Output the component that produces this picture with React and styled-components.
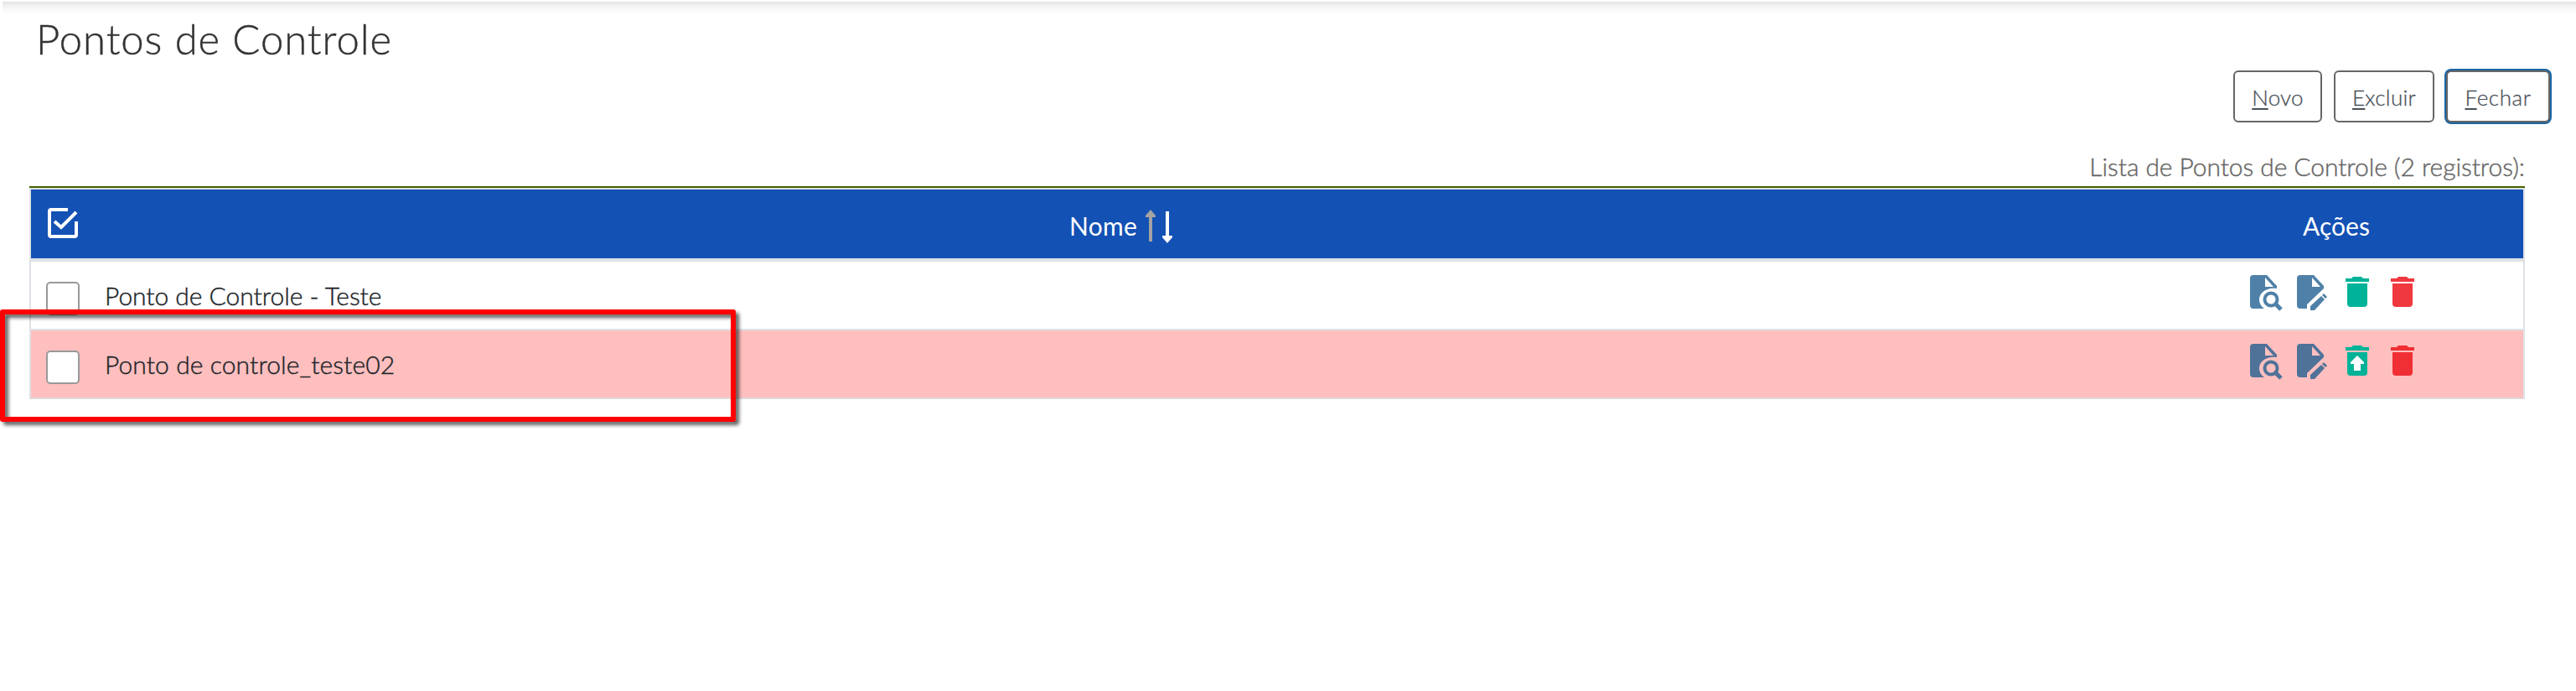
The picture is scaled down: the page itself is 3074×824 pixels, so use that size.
import React from "react";
import styled, { createGlobalStyle } from "styled-components";

const Global = createGlobalStyle`
  *{box-sizing:border-box}
  body{margin:0;background:#fff;color:#212529;font-family:Lato,"Open Sans",sans-serif;font-weight:300;overflow:hidden}
`;
const Page = styled.main`
  position: relative;
  height: 824px;
  padding-top: 2px;
`;
const TopShade = styled.div`
  height: 14px;
  margin-left: 3px;
  background: linear-gradient(#e4e4e4, #f3f3f3 40%, #fff);
`;
const Fit = styled.span`
  white-space: nowrap;
  letter-spacing: ${(p) => p.$ls || 0}px;
  -webkit-text-stroke: ${(p) => p.$heft || 0}px currentColor;
`;
const Title = styled.h1`
  margin: 0;
  padding: 0 0 0 43px;
  height: 68px;
  font-size: 49px;
  line-height: 60px;
  font-weight: 300;
  color: #333;
`;
const Commands = styled.div`
  display: flex;
  justify-content: flex-end;
  gap: 14px;
  padding: 0 31px 0 0;
`;
const Button = styled.button`
  width: ${(p) => p.$w}px;
  height: 62px;
  padding: 1px 0 0;
  border: 2px solid #666;
  border-radius: 6px;
  background: #fff;
  color: #495057;
  font: 300 26px Lato, sans-serif;
  -webkit-text-stroke: 0.3px currentColor;
  letter-spacing: ${(p) => p.$ls || 0}px;
  box-shadow: ${(p) => (p.$focus ? "0 0 0 2px #1c66a3" : "none")};
  u { text-decoration-thickness: 2px; text-underline-offset: 3px; text-decoration-skip-ink: none; }
`;
const Caption = styled.div`
  height: 78px;
  margin: 0 61px 0 35px;
  padding-top: 32px;
  border-bottom: 2px solid #466000;
  text-align: right;
  font-size: 30px;
  line-height: 40px;
  color: #666;
`;
const Table = styled.section`
  width: 2978px;
  margin-left: 35px;
  border: 2px solid #dee2e6;
  border-bottom-color: #e0d8db;
`;
const Row = styled.div`
  display: grid;
  grid-template-columns: 76px 2455px 443px;
  border-bottom: ${(p) => (p.$last ? 0 : 2)}px solid #dee2e6;
  height: ${(p) => (p.$last ? 80 : 82)}px;
  background: ${(p) => (p.$deleted ? "#ffbfbf" : "#fff")};
`;
const Head = styled(Row)`
  height: 86px;
  border-bottom: 4px solid #dee2e6;
  background: #1351b4;
  color: #fff;
  font-weight: 400;
`;
const CheckCell = styled.div`
  padding: ${(p) => p.$top}px 0 0 ${(p) => p.$left}px;
`;
const Check = styled.div`
  width: 40px;
  height: 40px;
  border: 2px solid #999;
  border-radius: 5px;
  background: #fff;
`;
const Name = styled.div`
  padding: 18px 0 0 12px;
  font-size: 30px;
  line-height: 44px;
`;
const HeadCell = styled.div`
  display: flex;
  justify-content: center;
  gap: 9px;
  padding: 23px ${(p) => p.$shift}px 0 0;
  font-size: 30px;
  line-height: 40px;
`;
const Actions = styled.div`
  display: flex;
  padding: 14px 0 0 116px;
`;
const Highlight = styled.div`
  position: absolute;
  left: 0;
  top: 369px;
  width: 878px;
  height: 134px;
  border: 6px solid #f00;
  border-radius: 3px;
  filter: drop-shadow(4px 4px 2px rgba(0, 0, 0, 0.62));
`;
const Icon = styled.svg`
  display: block;
`;

const SelectAll = () => (
  <Icon width="36" height="36" viewBox="0 0 36 36" fill="none" stroke="#fff" strokeWidth="4">
    <path d="M24 2H4Q2 2 2 4V32Q2 34 4 34H32Q34 34 34 32V16" />
    <path d="M8 16L16 23L34 5" />
  </Icon>
);
const Sort = () => (
  <Icon width="34" height="42" viewBox="0 0 34 42">
    <path fill="#a3a3a3" d="M5 39V10H1V8L7 1L13 8V10H9V39Z" />
    <path fill="#fff" d="M25 3V32H21V34L27 41L33 34V32H29V3Z" />
  </Icon>
);
const View = ({ c }) => (
  <Icon width="56" height="48" viewBox="0 0 56 48">
    <path fill={c} d="M5 2H21L33 15V18C20 16 12 24 12 31Q12 38 18 42H5Q1 42 1 38V6Q1 2 5 2ZM19 5V16H29Z" fillRule="evenodd" />
    <circle cx="26" cy="31" r="7.5" fill="none" stroke={c} strokeWidth="4" />
    <path d="M31 36L38 43" stroke={c} strokeWidth="5" />
  </Icon>
);
const Edit = ({ c }) => (
  <Icon width="56" height="48" viewBox="0 0 56 48">
    <path fill={c} d="M5 2H21L33 15V18L13 37V42H5Q1 42 1 38V6Q1 2 5 2ZM19 5V16H29Z" fillRule="evenodd" />
    <path fill={c} d="M17 39L30 27L34 31L22 44H17ZM31 26L33 24L37 28L35 30Z" />
  </Icon>
);
const Trash = ({ c, restore }) => (
  <Icon width="54" height="48" viewBox="-1 0 54 48">
    <path fill={c} d="M11 4H21L23 6H30V10H2V6H9ZM4 12H28V36Q28 40 24 40H8Q4 40 4 36Z" />
    {restore && <path fill="#fff" d="M16 16L24 24V26H20V34H12V26H8V24Z" />}
  </Icon>
);

const rows = [
  { name: "Ponto de Controle - Teste", ls: -0.04, doc: "#4f81a8", bin: "#f0383f", deleted: false },
  { name: "Ponto de controle_teste02", ls: 0.1, doc: "#4f7299", bin: "#f02f35", deleted: true },
];

export default function App() {
  return (
    <Page>
      <Global />
      <TopShade />
      <Title><Fit $ls={0.95} $heft={0.4}>Pontos de Controle</Fit></Title>
      <Commands>
        <Button $w={106} $ls={0.2}><u>N</u>ovo</Button>
        <Button $w={120} $ls={0.3}><u>E</u>xcluir</Button>
        <Button $w={124} $ls={0.6} $focus><u>F</u>echar</Button>
      </Commands>
      <Caption><Fit $ls={-0.08} $heft={0.4}>Lista de Pontos de Controle (2 registros):</Fit></Caption>
      <Table>
        <Head>
          <CheckCell $top={22} $left={20}><SelectAll /></CheckCell>
          <HeadCell $shift={5}><Fit $ls={0.3}>Nome</Fit><Sort /></HeadCell>
          <HeadCell $shift={3}><Fit>Ações</Fit></HeadCell>
        </Head>
        {rows.map((r) => (
          <Row key={r.name} $deleted={r.deleted} $last={r.deleted}>
            <CheckCell $top={24} $left={18}><Check /></CheckCell>
            <Name><Fit $ls={r.ls} $heft={0.4}>{r.name}</Fit></Name>
            <Actions>
              <View c={r.doc} />
              <Edit c={r.doc} />
              <Trash c="#00b398" restore={r.deleted} />
              <Trash c={r.bin} />
            </Actions>
          </Row>
        ))}
      </Table>
      <Highlight />
    </Page>
  );
}
